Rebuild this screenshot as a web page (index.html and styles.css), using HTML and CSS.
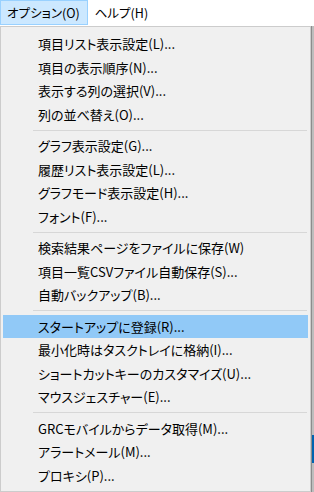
FILE: index.html
```html
<!DOCTYPE html>
<html lang="ja">
<head>
  <meta charset="UTF-8">
  <title>オプション</title>
  <link rel="stylesheet" href="styles.css">
</head>
<body>

  <!-- Menu bar -->
  <div class="menubar">
    <div class="menubar-item active">オプション(O)</div>
    <div class="menubar-item">ヘルプ(H)</div>
  </div>

  <!-- Dropdown -->
  <div class="drop-area">
    <div class="menu">
      <div class="menu-item">項目リスト表示設定(L)...</div>
      <div class="menu-item">項目の表示順序(N)...</div>
      <div class="menu-item">表示する列の選択(V)...</div>
      <div class="menu-item">列の並べ替え(O)...</div>
      <div class="menu-sep"></div>
      <div class="menu-item">グラフ表示設定(G)...</div>
      <div class="menu-item">履歴リスト表示設定(L)...</div>
      <div class="menu-item">グラフモード表示設定(H)...</div>
      <div class="menu-item">フォント(F)...</div>
      <div class="menu-sep"></div>
      <div class="menu-item">検索結果ページをファイルに保存(W)</div>
      <div class="menu-item">項目一覧CSVファイル自動保存(S)...</div>
      <div class="menu-item">自動バックアップ(B)...</div>
      <div class="menu-sep"></div>
      <div class="menu-item selected">スタートアップに登録(R)...</div>
      <div class="menu-item">最小化時はタスクトレイに格納(I)...</div>
      <div class="menu-item">ショートカットキーのカスタマイズ(U)...</div>
      <div class="menu-item">マウスジェスチャー(E)...</div>
      <div class="menu-sep"></div>
      <div class="menu-item">GRCモバイルからデータ取得(M)...</div>
      <div class="menu-item">アラートメール(M)...</div>
      <div class="menu-item">プロキシ(P)...</div>
    </div>

    <!-- window behind the menu -->
    <div class="behind">
      <div class="behind-bar"></div>
    </div>
  </div>

</body>
</html>
```

FILE: styles.css
```css
* {
  box-sizing: border-box;
  margin: 0;
  padding: 0;
}

body {
  font-family: "Noto Sans CJK JP", "Noto Sans", sans-serif;
  font-size: 12px;
  font-feature-settings: "palt";
  color: #000;
  background: #fff;
  width: 314px;
  height: 492px;
  overflow: hidden;
}

.menubar {
  display: flex;
  height: 26px;
  background: #fff;
}

.menubar-item {
  height: 25px;
  line-height: 23px;
  padding: 0 7px 0 6px;
  border: 1px solid transparent;
  font-size: 12.5px;
}

.menubar-item.active {
  background: #cce8ff;
  border-color: #99d1ff;
}

.drop-area {
  display: flex;
  height: 466px;
}

.menu {
  width: 311px;
  background: #f0f0f0;
  border: 1px solid #cccccc;
  padding: 5px 2px 3px 2px;
}

.menu-item {
  height: 23.5px;
  line-height: 23.5px;
  padding-left: 35px;
  font-size: 13px;
  white-space: nowrap;
}

.menu-item.selected {
  background: #91c9f7;
}

.menu-sep {
  height: 1px;
  margin: 3.5px 1px 3.5px 30px;
  background: #d7d7d7;
}

.behind {
  flex: 1;
  background: #bdbdbd;
  border-left: 1px solid #8c8c8c;
  padding-top: 409px;
}

.behind-bar {
  height: 28px;
  background: #0063b1;
}
```
